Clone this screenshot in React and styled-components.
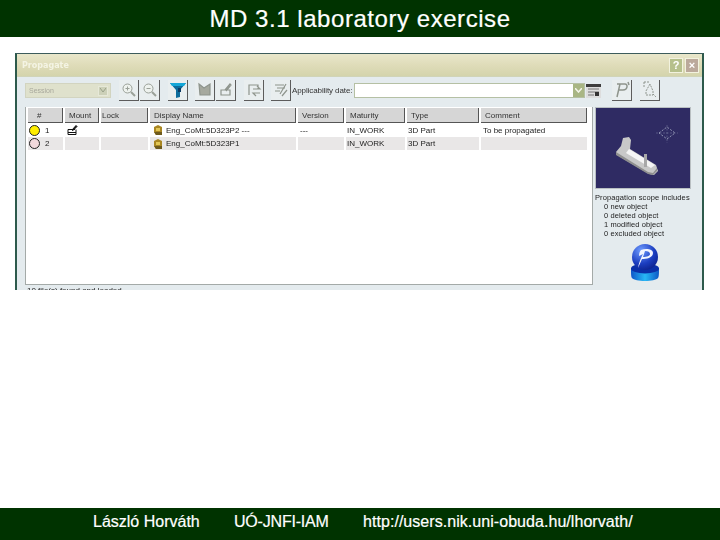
import React from "react";
import styled, { createGlobalStyle } from "styled-components";

const Global = createGlobalStyle`
  html, body { margin: 0; padding: 0; background: #fff; }
  * { box-sizing: border-box; }
`;
const Page = styled.div`
  width: 720px; height: 540px; display: flex; flex-direction: column; overflow: hidden; background: #fff;
  font-family: "Liberation Sans", Arial, sans-serif;
`;
const Header = styled.header`
  height: 37px; flex: none; background: #003300; color: #fff; display: flex; align-items: center; justify-content: center;
  font-size: 24px; letter-spacing: 0.55px; -webkit-text-stroke: 0.2px #fff;
`;
const Stage = styled.main`
  flex: 1; padding: 16px 16px 0 15px; min-height: 0;
`;
const Dialog = styled.section`
  height: 237px; overflow: hidden; background: #e4ebee; border-top: 1px solid #3d5c5c;
  border-left: 2px solid #2d5a4c; border-right: 2px solid #2d5a4c; display: flex; flex-direction: column;
  filter: blur(0.35px);
`;
const TitleBar = styled.div`
  height: 23px; flex: none; display: flex; align-items: center; justify-content: space-between; padding: 0 3px 0 5px;
  background: linear-gradient(180deg, #e9e7cb 0%, #dfdcb9 50%, #d4d4ac 100%);
  border-bottom: 1px solid #d0d4b8;
`;
const DialogTitle = styled.span`
  color: #f4f4e4; font-size: 8px; font-weight: 700; font-family: "DejaVu Sans", sans-serif;
`;
const WinButtons = styled.div` display: flex; gap: 2px; `;
const WinButton = styled.span`
  width: 14px; height: 15px; display: flex; align-items: center; justify-content: center; color: #fff;
  font-size: 11px; font-weight: 700; border: 1px solid #f2f2df; background: ${p => p.$close ? "#bba99b" : "#b6c08c"};
`;
const Toolbar = styled.div`
  height: 27px; flex: none; display: flex; align-items: center; padding: 0 0 0 8px;
`;
const SessionSelect = styled.div`
  width: 86px; height: 15px; flex: none; background: #dfe1cc; border: 1px solid #d2d4c0; display: flex; align-items: center;
  justify-content: space-between; padding: 0 2px 0 3px; font-size: 7px; color: #a8a89c; margin-right: 8px;
`;
const Arrow = styled.span`
  width: 10px; height: 10px; background: #ccd0b8; border: 1px solid #e6e8d8; display: flex; align-items: center; justify-content: center;
`;
const Group = styled.div` display: flex; gap: 1px; margin-right: ${p => p.$gap ?? 7}px; flex: none; `;
const Tool = styled.span`
  width: 20px; height: 21px; display: flex; align-items: center; justify-content: center;
  border-right: 1px solid #5c5c5c; border-bottom: 1px solid #5c5c5c; background: #e9eeef;
`;
const DateLabel = styled.span`
  font-size: 8px; color: #333; white-space: nowrap; margin-right: 2px; letter-spacing: -0.1px;
`;
const DateInput = styled.div`
  width: 231px; height: 15px; flex: none; background: #fff; border: 1px solid #b5c0a4; display: flex; justify-content: flex-end; align-items: center;
`;
const DateArrow = styled.span`
  width: 11px; height: 13px; background: #a9b684; display: flex; align-items: center; justify-content: center;
`;
const Calendar = styled.span`
  width: 15px; height: 15px; flex: none; margin-left: 1px; margin-right: 11px; display: flex;
`;
const Body = styled.div`
  flex: 1; display: flex; min-height: 0; padding: 3px 0 0 8px; gap: 2px;
`;
const Left = styled.div` width: 568px; flex: none; `;
const Table = styled.div`
  height: 178px; background: #fff; border: 1px solid #a4aaa8; border-top: none; padding: 1px 3px 0 2px;
`;
const Row = styled.div`
  display: grid; grid-template-columns: 37px 36px 49px 148px 48px 61px 74px 108px; height: ${p => p.$h}px; align-items: stretch;
`;
const HeadCell = styled.div`
  margin-right: 2px; background: #d6d6d6; border-right: 1px solid #555; border-bottom: 1px solid #555; font-size: 8px; color: #333;
  display: flex; align-items: center; padding-left: ${p => p.$pad ?? 4}px; white-space: nowrap; overflow: hidden;
`;
const Cell = styled.div`
  margin-right: 2px; background: ${p => p.$shade ? "#e9e7e7" : "#fff"}; font-size: 8px; color: #222; display: flex; align-items: center; gap: 3px;
  padding-left: ${p => p.$pad ?? 1}px; white-space: nowrap; overflow: hidden;
`;
const Status = styled.span`
  width: 11px; height: 11px; border-radius: 50%; flex: none; background: ${p => p.$bg}; border: 1.5px solid #222;
`;
const StatusNumber = styled.span` font-size: 8px; margin-left: 2px; `;
const StatusBar = styled.div` font-size: 8px; color: #222; padding: 1px 0 0 2px; white-space: nowrap; `;
const Side = styled.aside`
  width: 97px; flex: none; display: flex; flex-direction: column; color: #222; font-size: 7.5px; line-height: 9px;
`;
const Preview = styled.div`
  width: 96px; height: 82px; flex: none; background: #2f2b63; border: 1px solid #b9bfc2; margin-bottom: 4px;
`;
const Scope = styled.div` white-space: nowrap; letter-spacing: 0.1px; `;
const ScopeLine = styled.div` padding-left: ${p => p.$in ? 9 : 0}px; `;
const LogoWrap = styled.div` display: flex; justify-content: center; margin: 6px 0 0 3px; `;
const Footer = styled.footer`
  height: 32px; flex: none; background: #003300; color: #fff; display: flex; align-items: center; padding: 0 0 4px 93px;
`;
const FootText = styled.span`
  display: block; flex: none; width: ${p => p.$w}px; white-space: nowrap; letter-spacing: ${p => p.$ls}px;
  font-family: "Liberation Sans", sans-serif; font-size: 16px; -webkit-text-stroke: 0.2px #fff;
`;

const Zoom = ({ minus }) => (
  <svg width="16" height="16" viewBox="0 0 16 16" fill="none" stroke="#9aa098" strokeWidth="1">
    <circle cx="6.5" cy="6.5" r="4.5" fill="#eef2ee" />
    <path d="M4.5 6.5h4" />
    {!minus && <path d="M6.5 4.5v4" />}
    <path d="M10 10l4 4" strokeWidth="2" />
  </svg>
);
const Funnel = () => (
  <svg width="18" height="17" viewBox="0 0 18 17">
    <path d="M1 1h16l-6 7v7l-4 1V8z" fill="#0c6c9c" />
    <path d="M1 1h16l-2 3H3z" fill="#15a7d8" />
    <path d="M9 6h3v4H9z" fill="#0b3a63" />
  </svg>
);
const Disabled = ({ d, fill = "none" }) => (
  <svg width="16" height="16" viewBox="0 0 16 16" fill={fill} stroke="#8e948c" strokeWidth="1.2"><path d={d} /></svg>
);
const Part = () => (
  <svg width="10" height="10" viewBox="0 0 10 10" style={{ flex: "none" }}>
    <path d="M1 2l4-2 4 2v5l-3 3H3L1 7z" fill="#a98622" />
    <path d="M3 3h4v3H3z" fill="#e2c654" />
    <path d="M1 7h8v3H3z" fill="#6e5a1d" />
  </svg>
);
const Mount = () => (
  <svg width="11" height="10" viewBox="0 0 11 10" fill="none" stroke="#111">
    <path d="M1 4.5h7M1 4.5v5h8v-5M1 7.5h8" />
    <path d="M5 5l4-4.500 1 1-4 4z" fill="#111" />
  </svg>
);
const PartPreview = () => (
  <svg width="94" height="80" viewBox="0 0 94 80">
    <g fill="none" stroke="#aab0c8" strokeWidth="0.8" strokeDasharray="2 1.500">
      <path d="M63 25l8-6 8 6-8 6z" />
      <path d="M71 17v18M60 25h22" opacity="0.4" />
    </g>
    <path d="M20 44l5-6 2-8 6-1 2 3-1 9 26 16 2 6-4 4-5-1-32-19z" fill="#c8c8c8" />
    <path d="M33 41l26 16-4 3-25-15z" fill="#f5f5f5" />
    <path d="M20 44l32 20 5 1 4-5 0 3-4 4-5-1-32-19z" fill="#8f8f8f" />
    <path d="M48 46h3v13h-3z" fill="#a8a8a8" />
  </svg>
);
const Logo = () => (
  <svg width="30" height="39" viewBox="0 0 30 39">
    <defs>
      <radialGradient id="ball" cx="0.35" cy="0.25" r="0.85">
        <stop offset="0" stopColor="#6f9cff" />
        <stop offset="0.6" stopColor="#1c3ec0" />
        <stop offset="1" stopColor="#0b1f88" />
      </radialGradient>
      <linearGradient id="disc" x1="0" y1="0" x2="1" y2="0">
        <stop offset="0" stopColor="#0d56c8" />
        <stop offset="0.5" stopColor="#27b8f5" />
        <stop offset="1" stopColor="#0b58c6" />
      </linearGradient>
    </defs>
    <path d="M1 24c0 5 0 9 1 10 3 4 23 4 26 0 1-1 1-5 1-10z" fill="url(#disc)" />
    <ellipse cx="15" cy="24.500" rx="14" ry="5" fill="#0a2fa8" />
    <circle cx="15" cy="13" r="13" fill="url(#ball)" />
    <path d="M11 6c5-2 12-1 12 3 0 5-7 6-11 6l-4 9c1-5 2-8 5-14l-4 2c0-3 1-5 2-6zm4 1l-2 6c4 0 7-1 7-3s-2-3-5-3z" fill="#f2f4ff" />
  </svg>
);

const rows = [
  { status: "#ffee00", n: "1", mount: true, name: "Eng_CoMt:5D323P2 ---", version: "---", type: "3D Part", comment: "To be propagated" },
  { status: "#f2d9dc", n: "2", shade: true, name: "Eng_CoMt:5D323P1", version: "", type: "3D Part", comment: "" },
];

export default function App() {
  return (
    <Page>
      <Global />
      <Header>MD 3.1 laboratory exercise</Header>
      <Stage>
        <Dialog>
          <TitleBar>
            <DialogTitle>Propagate</DialogTitle>
            <WinButtons>
              <WinButton>?</WinButton>
              <WinButton $close>×</WinButton>
            </WinButtons>
          </TitleBar>
          <Toolbar>
            <SessionSelect>
              Session
              <Arrow>
                <svg width="6" height="5" viewBox="0 0 6 5"><path d="M0 0l3 4 3-4" fill="none" stroke="#98a088" /></svg>
              </Arrow>
            </SessionSelect>
            <Group $gap={8}>
              <Tool><Zoom /></Tool>
              <Tool><Zoom minus /></Tool>
            </Group>
            <Group>
              <Tool><Funnel /></Tool>
            </Group>
            <Group $gap={8}>
              <Tool><Disabled fill="#a6a99e" d="M2 2l5 4 6-4v11H3z" /></Tool>
              <Tool><Disabled d="M3 8h9v5H3zM7 8l5-6 1 1-5 6" /></Tool>
            </Group>
            <Group>
              <Tool><Disabled d="M3 13V3h9v4M7 7h7l-3-3M14 11H7l3 3" /></Tool>
            </Group>
            <Group $gap={1}>
              <Tool><Disabled d="M2 3h9M4 6h8M2 9h5M13 2l-6 10M9 14l5-6" /></Tool>
            </Group>
            <DateLabel>Applicability date:</DateLabel>
            <DateInput>
              <DateArrow>
                <svg width="7" height="5" viewBox="0 0 7 5"><path d="M0 0l3.500 4L7 0" fill="none" stroke="#f4f4e8" strokeWidth="1.500" /></svg>
              </DateArrow>
            </DateInput>
            <Calendar>
              <svg width="15" height="15" viewBox="0 0 15 15">
                <path d="M0 1h15v14H0z" fill="#ddd" />
                <path d="M0 1h15v3H0z" fill="#3d3d3d" />
                <path d="M2 6h11M2 9h11M2 12h6" stroke="#777" />
                <path d="M9 9h4v4H9z" fill="#333" />
              </svg>
            </Calendar>
            <Group $gap={8}>
              <Tool>
                <svg width="18" height="18" viewBox="0 0 18 18" fill="none" stroke="#8e948c" strokeWidth="1.500"><path d="M4 3h8c3 0 3 6-2 6H6M7 3L4 16M15 1l1 3" /></svg>
              </Tool>
            </Group>
            <Group $gap={0}>
              <Tool>
                <svg width="16" height="18" viewBox="0 0 16 18" fill="none" stroke="#8e948c"><path d="M2 1h6M2 1v5M8 3l-4 7v4h7v-4zM11 13l3 3" strokeDasharray="2 1" /></svg>
              </Tool>
            </Group>
          </Toolbar>
          <Body>
            <Left>
              <Table>
                <Row $h={15}>
                  <HeadCell $pad={9}>#</HeadCell>
                  <HeadCell>Mount</HeadCell>
                  <HeadCell $pad={1}>Lock</HeadCell>
                  <HeadCell>Display Name</HeadCell>
                  <HeadCell>Version</HeadCell>
                  <HeadCell>Maturity</HeadCell>
                  <HeadCell>Type</HeadCell>
                  <HeadCell>Comment</HeadCell>
                </Row>
                {rows.map((r) => (
                  <Row key={r.n} $h={r.shade ? 13 : 14}>
                    <Cell $shade={r.shade}><Status $bg={r.status} /><StatusNumber>{r.n}</StatusNumber></Cell>
                    <Cell $shade={r.shade} $pad={2}>{r.mount && <Mount />}</Cell>
                    <Cell $shade={r.shade} />
                    <Cell $shade={r.shade} $pad={3}><Part />{r.name}</Cell>
                    <Cell $shade={r.shade} $pad={2}>{r.version}</Cell>
                    <Cell $shade={r.shade} $pad={1}>IN_WORK</Cell>
                    <Cell $shade={r.shade} $pad={1}>{r.type}</Cell>
                    <Cell $shade={r.shade} $pad={2}>{r.comment}</Cell>
                  </Row>
                ))}
              </Table>
              <StatusBar>10 file(s) found and loaded</StatusBar>
            </Left>
            <Side>
              <Preview><PartPreview /></Preview>
              <Scope>
                <ScopeLine>Propagation scope includes</ScopeLine>
                <ScopeLine $in>0 new object</ScopeLine>
                <ScopeLine $in>0 deleted object</ScopeLine>
                <ScopeLine $in>1 modified object</ScopeLine>
                <ScopeLine $in>0 excluded object</ScopeLine>
              </Scope>
              <LogoWrap><Logo /></LogoWrap>
            </Side>
          </Body>
        </Dialog>
      </Stage>
      <Footer>
        <FootText $w={141} $ls={0}>László Horváth</FootText>
        <FootText $w={129} $ls={-0.2}>UÓ-JNFI-IAM</FootText>
        <FootText $w={270} $ls={0.05}>http://users.nik.uni-obuda.hu/lhorvath/</FootText>
      </Footer>
    </Page>
  );
}
